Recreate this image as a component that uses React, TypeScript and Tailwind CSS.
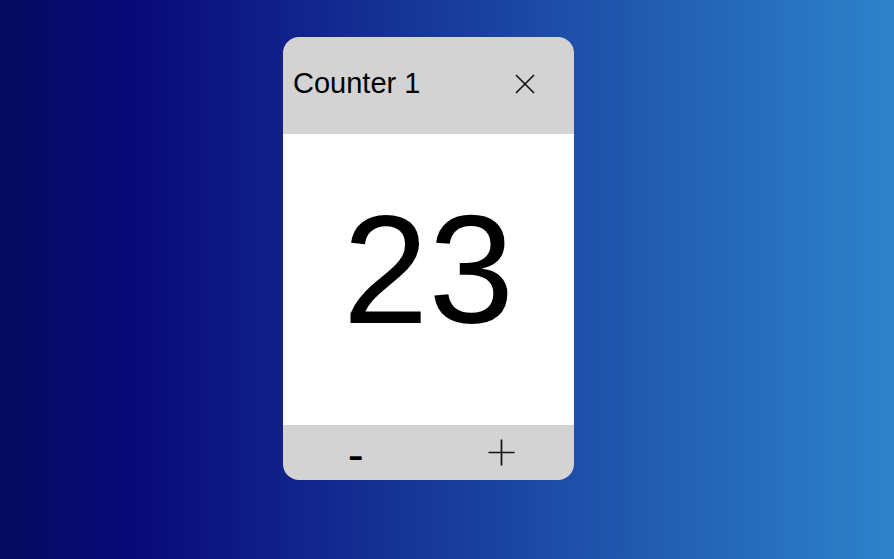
import { useState } from "react";

// Single counter card on a blue gradient backdrop.

function CloseIcon() {
  return (
    <svg width="20" height="20" viewBox="0 0 20 20" aria-hidden="true">
      <path d="M1 1 L19 19 M19 1 L1 19" stroke="#111" strokeWidth="1.6" fill="none" />
    </svg>
  );
}

function PlusIcon() {
  return (
    <svg width="27" height="27" viewBox="0 0 27 27" aria-hidden="true">
      <path d="M13.5 0.5 V26.5 M0.5 13.5 H26.5" stroke="#111" strokeWidth="1.7" fill="none" />
    </svg>
  );
}

export default function App() {
  const [count, setCount] = useState(23);

  return (
    <div className="h-[559px] w-full overflow-hidden bg-[linear-gradient(to_right,#060b5f_0%,#09097a_15%,#2d83cb_100%)] pt-[37px] font-['Liberation_Sans',Arial,sans-serif]">
      <div className="ml-[283px] flex h-[443px] w-[291px] flex-col overflow-hidden rounded-[16px] bg-[#d3d3d3]">
        <div className="flex h-[97px] items-center pb-[3px]">
          <span className="flex-1 pl-[10px] text-[29px] text-black">Counter 1</span>
          <button type="button" className="mr-[39px] flex items-center">
            <CloseIcon />
          </button>
        </div>
        <div className="flex h-[291px] items-center justify-center bg-white pb-[18px]">
          <span className="text-[154px] text-black">{count}</span>
        </div>
        <div className="flex h-[55px]">
          <button
            type="button"
            onClick={() => setCount((c) => c - 1)}
            className="flex flex-1 items-center justify-center pt-[5px] text-[48px] text-black"
          >
            -
          </button>
          <button
            type="button"
            onClick={() => setCount((c) => c + 1)}
            className="flex flex-1 items-center justify-center"
          >
            <PlusIcon />
          </button>
        </div>
      </div>
    </div>
  );
}
